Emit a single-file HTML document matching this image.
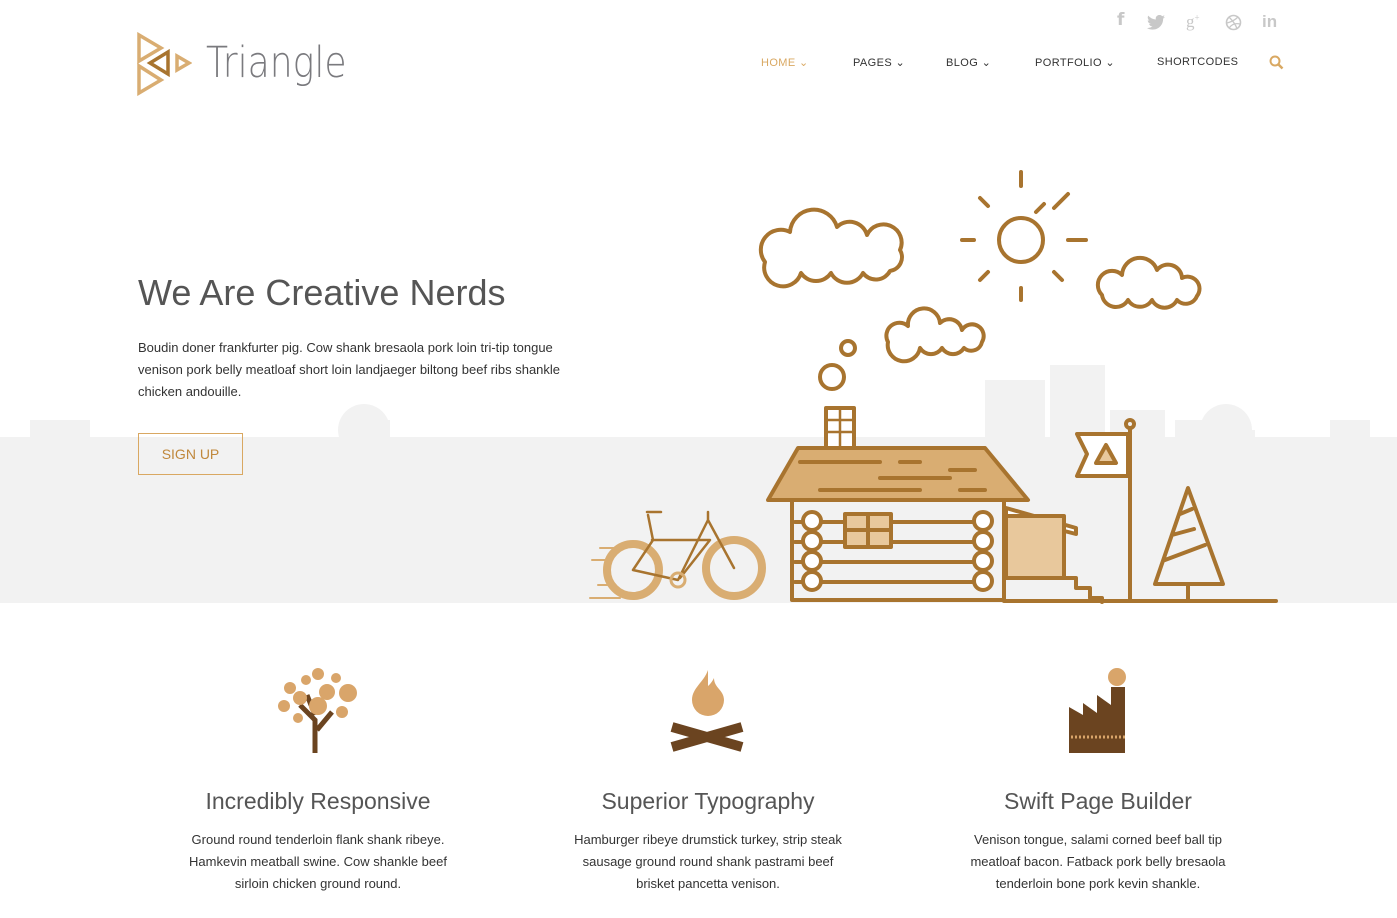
<!DOCTYPE html>
<html><head><meta charset="utf-8"><style>
*{margin:0;padding:0;box-sizing:border-box}
body{width:1397px;height:918px;overflow:hidden;background:#fff;font-family:"Liberation Sans",sans-serif;position:relative;color:#333}
.abs{position:absolute}
.nav a{position:absolute;top:56px;font-size:11px;letter-spacing:.4px;color:#333;text-decoration:none;white-space:nowrap}
.soc{position:absolute;top:12px;color:#c8c8c8;font-size:17px;font-weight:bold}
h2{position:absolute;font-weight:300;font-size:23px;color:#555;text-align:center;width:340px}
p.f{position:absolute;font-size:13px;line-height:22px;color:#333;text-align:center;width:340px;white-space:nowrap}
</style></head><body>
<svg class="abs" style="left:0;top:0" width="1397" height="610">
<g fill="#f2f2f2">
<rect x="0" y="437" width="1397" height="166"/>
<rect x="30" y="420" width="60" height="30"/><rect x="120" y="460" width="110" height="40"/>
<rect x="235" y="440" width="50" height="30"/><rect x="290" y="450" width="45" height="20"/>
<rect x="340" y="420" width="50" height="30"/><circle cx="364" cy="430" r="26"/>
<rect x="420" y="445" width="60" height="20"/>
<rect x="985" y="380" width="60" height="70"/><rect x="1050" y="365" width="55" height="85"/>
<rect x="1110" y="410" width="55" height="40"/><rect x="1175" y="420" width="30" height="30"/>
<rect x="1205" y="430" width="50" height="30"/><circle cx="1226" cy="430" r="26"/>
<rect x="1260" y="440" width="60" height="30"/><rect x="1330" y="420" width="40" height="30"/>
</g>
<g fill="none" stroke="#a8742f" stroke-width="4" stroke-linecap="round" stroke-linejoin="round">
<path d="M765 262a20 20 0 0 1 25-30a24 24 0 0 1 47-5a18 18 0 0 1 30 8a18 18 0 0 1 33 15a14 14 0 0 1-10 21a16 16 0 0 1-27 2a18 18 0 0 1-32 0a18 18 0 0 1-30 0a16 16 0 0 1-36-11z"/>
<path d="M1102 295a14 14 0 0 1 20-20a18 18 0 0 1 35-5a14 14 0 0 1 25 8a12 12 0 0 1 15 18a12 12 0 0 1-20 4a14 14 0 0 1-25 0a14 14 0 0 1-24 0a14 14 0 0 1-26-5z"/>
<path d="M888 342a13 13 0 0 1 20-16a16 16 0 0 1 32-3a13 13 0 0 1 22 7a11 11 0 0 1 20 12a11 11 0 0 1-18 6a13 13 0 0 1-22 0a13 13 0 0 1-22 0a13 13 0 0 1-32-6z"/>
<circle cx="1021" cy="240" r="22"/>
<path d="M1021 172v14M1021 288v12M962 240h12M1068 240h18M980 198l8 8M1054 272l8 8M1068 194l-14 14M988 272l-8 8M1036 212l8-8"/>
<circle cx="848" cy="348" r="7"/><circle cx="832" cy="377" r="12"/>
<rect x="826" y="408" width="28" height="40" fill="#fff"/>
<path d="M826 420h28M826 432h28M840 408v40" stroke-width="2.5"/>
<path d="M768 500l30-52h187l43 52z" fill="#d9ad72"/>
<path d="M800 462h80M900 462h20M880 478h70M820 490h100M960 490h25M950 470h25"/>
<path d="M792 500v100h212V500"/>
<path d="M795 522h190M795 542h190M795 562h190M795 582h190"/>
<g fill="#fff"><circle cx="812" cy="521" r="9"/><circle cx="812" cy="541" r="9"/><circle cx="812" cy="561" r="9"/><circle cx="812" cy="581" r="9"/>
<circle cx="983" cy="521" r="9"/><circle cx="983" cy="541" r="9"/><circle cx="983" cy="561" r="9"/><circle cx="983" cy="581" r="9"/></g>
<rect x="845" y="514" width="46" height="33" fill="#e8c89c"/><path d="M868 514v33M845 530h46"/>
<path d="M1006 508l70 20v6l-70-18z" fill="#fff"/><rect x="1006" y="516" width="58" height="62" fill="#e8c89c"/>
<path d="M1006 578h70v10h14v10h12v4M1004 601h272"/>
<path d="M1130 428v172"/><circle cx="1130" cy="424" r="4"/>
<path d="M1128 434h-51l10 20l-10 22h51z" fill="#fff"/><path d="M1096 463l10-18l10 18z" fill="#e8c89c"/>
<path d="M1188 488l-33 96h68zM1188 584v16M1172 535l22-6M1165 560l40-15M1180 514l12-5"/>
<g stroke="#d9ad72" stroke-width="8"><circle cx="633" cy="570" r="26"/><circle cx="734" cy="568" r="28"/></g>
<path d="M633 570l45 10l30-60M652 540h58l-30 38M633 570l20-30l-5-25M708 520l26 48M647 512h14M708 512v8" stroke-width="2.5"/>
<circle cx="678" cy="580" r="7" stroke="#d9ad72" stroke-width="3"/>
<path d="M600 548h16M592 560h18M598 585h14M590 598h30" stroke="#d9ad72" stroke-width="2"/>
</g>
</svg>
<svg class="abs" style="left:136px;top:32px" width="56" height="64" viewBox="0 0 56 64" fill="none" stroke-width="3.5">
<path d="M3 3v26l22-13z" stroke="#d9ad72"/><path d="M3 34v27l22-13z" stroke="#d9ad72"/>
<path d="M32 20v22l-18-11z" stroke="#a8742f"/><path d="M41 24v14l12-7z" stroke="#d9ad72"/>
</svg>
<div class="abs" style="left:206px;top:38px;font-size:43px;color:#7a7a7e;font-family:'DejaVu Sans',sans-serif;font-weight:200;transform:scaleX(0.84);transform-origin:0 0">Triangle</div>
<div class="soc" style="left:1117px;top:10px;font-family:'DejaVu Sans'">f</div>
<svg class="abs" style="left:1147px;top:15px" width="18" height="15" viewBox="0 0 24 20"><path d="M24 2.4a10 10 0 0 1-2.8.8A5 5 0 0 0 23.3.4a10 10 0 0 1-3.1 1.2A4.9 4.9 0 0 0 11.8 6 14 14 0 0 1 1.7.9a4.9 4.9 0 0 0 1.5 6.6A4.9 4.9 0 0 1 1 6.9a4.9 4.9 0 0 0 3.9 4.8 4.9 4.9 0 0 1-2.2.1 4.9 4.9 0 0 0 4.6 3.4A9.9 9.9 0 0 1 0 17.3 14 14 0 0 0 7.5 19.5c9.1 0 14-7.5 14-14v-.6A10 10 0 0 0 24 2.4z" fill="#c8c8c8"/></svg>
<div class="soc" style="left:1186px;font-weight:normal;font-family:'Liberation Serif'">g<sup style="font-size:9px">+</sup></div>
<svg class="abs" style="left:1225px;top:14px" width="17" height="17"><circle cx="8.5" cy="8.5" r="7" fill="none" stroke="#c8c8c8" stroke-width="1.6"/><path d="M4 3c4 4 7 8 8 12M2 9c4-1 8-3 11-6M4 14c3-4 7-5 11-4" fill="none" stroke="#c8c8c8" stroke-width="1.3"/></svg>
<div class="soc" style="left:1262px">in</div>
<div class="nav">
<a style="left:761px;color:#d9a862">HOME ⌄</a><a style="left:853px">PAGES ⌄</a><a style="left:946px">BLOG ⌄</a><a style="left:1035px">PORTFOLIO ⌄</a><a style="left:1157px">SHORTCODES</a>
</div>
<svg class="abs" style="left:1269px;top:55px" width="15" height="15"><circle cx="6" cy="6" r="4.5" fill="none" stroke="#d9a862" stroke-width="2"/><path d="M9.5 9.5l4 4" stroke="#d9a862" stroke-width="2.5"/></svg>
<div class="abs" style="left:138px;top:272px;font-size:36px;font-weight:300;color:#555">We Are Creative Nerds</div>
<div class="abs" style="left:138px;top:337px;width:470px;font-size:13px;line-height:22px;color:#333;white-space:nowrap">Boudin doner frankfurter pig. Cow shank bresaola pork loin tri-tip tongue<br>venison pork belly meatloaf short loin landjaeger biltong beef ribs shankle<br>chicken andouille.</div>
<div class="abs" style="left:138px;top:433px;width:105px;height:42px;border:1px solid #d9a862;color:#c0883c;font-size:14px;text-align:center;line-height:40px">SIGN UP</div>
<svg class="abs" style="left:270px;top:660px" width="95" height="95"><path d="M45 93V60l-15-15M47 70l15-18M45 55l-8-20" stroke="#6b4420" stroke-width="5" fill="none"/>
<g fill="#d9a56a"><circle cx="20" cy="28" r="6"/><circle cx="30" cy="38" r="7"/><circle cx="48" cy="14" r="6"/><circle cx="57" cy="32" r="8"/><circle cx="78" cy="33" r="9"/><circle cx="48" cy="46" r="9"/><circle cx="36" cy="20" r="5"/><circle cx="66" cy="18" r="5"/><circle cx="14" cy="46" r="6"/><circle cx="28" cy="58" r="5"/><circle cx="72" cy="52" r="6"/></g></svg>
<svg class="abs" style="left:668px;top:665px" width="80" height="90"><path d="M40 5c-4 12-16 18-16 30a16 16 0 0 0 32 0c0-10-10-12-10-22c-3 6-6 8-6 8z" fill="#d9a56a"/>
<path d="M4 62l70 20M4 82l70-20" stroke="#6b4420" stroke-width="10"/></svg>
<svg class="abs" style="left:1065px;top:665px" width="66" height="90"><circle cx="52" cy="12" r="9" fill="#d9a56a"/><path d="M4 88V42l14 8V38l14 10V30l14 10V22h14v66z" fill="#6b4420"/><path d="M6 72h54" stroke="#d9a56a" stroke-width="3" stroke-dasharray="2 2"/></svg>
<h2 style="left:148px;top:788px">Incredibly Responsive</h2>
<h2 style="left:538px;top:788px">Superior Typography</h2>
<h2 style="left:928px;top:788px">Swift Page Builder</h2>
<p class="f" style="left:148px;top:829px">Ground round tenderloin flank shank ribeye.<br>Hamkevin meatball swine. Cow shankle beef<br>sirloin chicken ground round.</p>
<p class="f" style="left:538px;top:829px">Hamburger ribeye drumstick turkey, strip steak<br>sausage ground round shank pastrami beef<br>brisket pancetta venison.</p>
<p class="f" style="left:928px;top:829px">Venison tongue, salami corned beef ball tip<br>meatloaf bacon. Fatback pork belly bresaola<br>tenderloin bone pork kevin shankle.</p>
</body></html>
